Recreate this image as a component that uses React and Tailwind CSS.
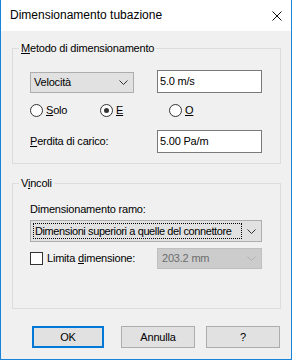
const ui = "font-['Liberation_Sans',Arial,sans-serif] text-[11px] leading-[13px] tracking-[-0.2px] text-black";

function Chevron({ color = '#333' }) {
  return (
    <svg width="9" height="5" viewBox="0 0 9 5" className="shrink-0">
      <polyline points="0.5,0.5 4.5,4.5 8.5,0.5" fill="none" stroke={color} strokeWidth="1" />
    </svg>
  );
}

function Radio({ checked, children, className = '' }) {
  return (
    <div className={`flex items-center ${className}`}>
      <span className="w-[13px] h-[13px] rounded-full border border-[#333] bg-white flex items-center justify-center">
        {checked && <span className="w-[5px] h-[5px] rounded-full bg-[#333]" />}
      </span>
      <span className="ml-[3px]">{children}</span>
    </div>
  );
}

function Button({ children, primary, className = '' }) {
  return (
    <div
      className={`h-[22px] flex items-center justify-center bg-[#e1e1e1] ${
        primary ? 'border-2 border-[#0078d7]' : 'border border-[#adadad]'
      } ${className}`}
    >
      {children}
    </div>
  );
}

export default function App() {
  return (
    <div className={`w-[292px] h-[360px] flex flex-col bg-[#f0f0f0] border-x border-b border-[#1883d7] ${ui}`}>
      <div className="h-[31px] bg-white flex items-center justify-between pl-[9px] pr-[9px]">
        <span className="text-[12px] tracking-normal">Dimensionamento tubazione</span>
        <svg width="10" height="10" viewBox="0 0 10 10">
          <path d="M0.5 0.5 L9.5 9.5 M9.5 0.5 L0.5 9.5" stroke="#111" strokeWidth="1" />
        </svg>
      </div>

      <div className="flex-1 flex flex-col px-[11px] pt-[11px]">
        <fieldset className="w-[269px] border border-[#dcdcdc] pl-[6px] pb-[10px]">
          <legend className="px-[2px] leading-[13px]">
            <u>M</u>etodo di dimensionamento
          </legend>
          <div className="pl-[11px] pt-[15px]">
            <div className="flex items-start">
              <div className="mt-[2px] w-[104px] h-[21px] border border-[#adadad] bg-[#e1e1e1] flex items-center pl-[3px] pr-[5px]">
                <span>Velocità</span>
                <span className="ml-auto"><Chevron /></span>
              </div>
              <div className="ml-[23px] w-[105px] h-[23px] border border-[#7a7a7a] bg-white flex items-center pl-[2px]">
                5.0 m/s
              </div>
            </div>

            <div className="mt-[11px] flex items-center h-[13px]">
              <Radio className="w-[70px]"><u>S</u>olo</Radio>
              <Radio checked className="w-[69px]"><u>E</u></Radio>
              <Radio><u>O</u></Radio>
            </div>

            <div className="mt-[13px] flex items-center">
              <span className="w-[127px]"><u>P</u>erdita di carico:</span>
              <div className="w-[105px] h-[23px] border border-[#7a7a7a] bg-white flex items-center pl-[2px]">
                5.00 Pa/m
              </div>
            </div>
          </div>
        </fieldset>

        <fieldset className="mt-[13px] w-[269px] border border-[#dcdcdc] pl-[6px] pb-[39px]">
          <legend className="px-[2px] leading-[13px]">
            V<u>i</u>ncoli
          </legend>
          <div className="pl-[11px] pt-[13px]">
            <div>Dimensionamento ramo:</div>
            <div className="mt-[4px] w-[232px] h-[22px] border border-[#adadad] bg-[#e1e1e1] flex items-center pl-[2px] pr-[5px]">
              <div className="w-[209px] h-[16px] border border-dotted border-black flex items-center pl-[1px] whitespace-nowrap overflow-hidden tracking-[-0.4px]">
                Dimensioni superiori a quelle del connettore
              </div>
              <span className="ml-auto"><Chevron /></span>
            </div>
            <div className="mt-[6px] flex items-center">
              <div className="w-[127px] flex items-center">
                <span className="w-[13px] h-[13px] border border-[#333] bg-white" />
                <span className="ml-[4px]">Limita <u>d</u>imensione:</span>
              </div>
              <div className="w-[105px] h-[21px] border border-[#bfbfbf] bg-[#cccccc] flex items-center pl-[4px] pr-[5px] text-[#6d6d6d]">
                <span>203.2 mm</span>
                <span className="ml-auto"><Chevron color="#b0b0b0" /></span>
              </div>
            </div>
          </div>
        </fieldset>

        <div className="mt-[17px] flex pl-[20px]">
          <Button primary className="w-[72px]">OK</Button>
          <Button className="ml-[17px] w-[74px]">Annulla</Button>
          <Button className="ml-[11px] w-[74px]">?</Button>
        </div>
      </div>
    </div>
  );
}
